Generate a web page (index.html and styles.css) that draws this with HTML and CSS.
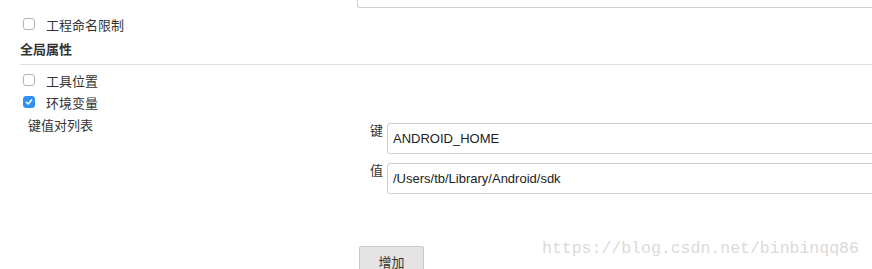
FILE: index.html
```html
<!DOCTYPE html>
<html lang="zh-CN">
<head>
    <meta charset="UTF-8">
    <title>全局属性</title>
    <link rel="stylesheet" href="styles.css">
</head>
<body>

    <div class="page">
        <div class="top-box"></div>

        <label class="check-row first">
            <span class="box"></span>
            <span class="check-text">工程命名限制</span>
        </label>

        <h3 class="section-title">全局属性</h3>

        <label class="check-row">
            <span class="box"></span>
            <span class="check-text">工具位置</span>
        </label>
        <label class="check-row">
            <span class="box checked">
                <svg width="8" height="8" viewBox="0 0 8 8"><path d="M1.3 4.2 L3.2 6 L6.7 1.8" fill="none" stroke="#fff" stroke-width="1.5" stroke-linecap="round" stroke-linejoin="round"/></svg>
            </span>
            <span class="check-text">环境变量</span>
        </label>

        <div class="kv-section">
            <div class="kv-label">键值对列表</div>
            <div class="kv-list">
                <div class="kv-row">
                    <div class="kv-key">键</div>
                    <input class="kv-input" type="text" value="ANDROID_HOME">
                </div>
                <div class="kv-row">
                    <div class="kv-key">值</div>
                    <input class="kv-input" type="text" value="/Users/tb/Library/Android/sdk">
                </div>
                <button class="add-button">增加</button>
            </div>
        </div>
    </div>

    <div class="watermark">https://blog.csdn.net/binbinqq86</div>

</body>
</html>
```

FILE: styles.css
```css
/* General Reset */
* {
    margin: 0;
    padding: 0;
    box-sizing: border-box;
}

body, html {
    height: 100%;
    font-family: 'Liberation Sans', 'Noto Sans CJK SC', sans-serif;
    font-size: 13px;
    color: #333;
    background: #fff;
    overflow: hidden;
}

.page {
    padding-left: 20px;
}

/* Bottom of the textarea above */
.top-box {
    height: 8px;
    margin-left: 337px;
    margin-right: -20px;
    border: 1px solid #cfcfcf;
    border-top: none;
    border-right: none;
    border-bottom-left-radius: 3px;
}

/* Checkbox rows */
.check-row {
    display: flex;
    align-items: center;
    height: 22px;
}

.check-row.first {
    margin-top: 5px;
}

.box {
    width: 12px;
    height: 12px;
    margin-left: 3px;
    border: 1px solid #b4b4b4;
    border-radius: 3px;
    background: #fff;
    display: flex;
    align-items: center;
    justify-content: center;
}

.box.checked {
    background: #2f8ff5;
    border-color: #2f8ff5;
}

.check-text {
    margin-left: 11px;
}

/* Section title */
.section-title {
    margin-top: 5px;
    font-size: 13px;
    font-weight: bold;
    line-height: 20px;
    padding-bottom: 4px;
    border-bottom: 1px solid #e0e0e0;
    margin-bottom: 4px;
}

/* Key / value list */
.kv-section {
    display: grid;
    grid-template-columns: 337px 1fr;
    margin-top: 3px;
}

.kv-label {
    padding-left: 8px;
    line-height: 20px;
}

.kv-list {
    padding-top: 7px;
}

.kv-row {
    display: flex;
    margin-bottom: 9px;
    margin-right: -20px;
}

.kv-key {
    flex: none;
    width: 30px;
    padding-left: 13px;
    line-height: 16px;
}

.kv-input {
    flex: 1;
    min-width: 0;
    height: 31px;
    padding: 0 5px;
    font-family: 'Liberation Sans', 'Noto Sans CJK SC', sans-serif;
    font-size: 13px;
    color: #222;
    border: 1px solid #cfcfcf;
    border-radius: 3px;
    background: #fff;
    outline: none;
}

.add-button {
    margin-top: 43px;
    margin-left: 2px;
    width: 65px;
    height: 30px;
    font-family: 'Liberation Sans', 'Noto Sans CJK SC', sans-serif;
    font-size: 13px;
    color: #333;
    background: #e4e4e4;
    border: 1px solid #c9c9c9;
    border-radius: 2px;
}

/* Blog watermark over the page */
.watermark {
    position: absolute;
    left: 542px;
    top: 240px;
    font-family: 'Liberation Mono', monospace;
    font-size: 16.5px;
    line-height: 17px;
    color: #dadada;
}
```
